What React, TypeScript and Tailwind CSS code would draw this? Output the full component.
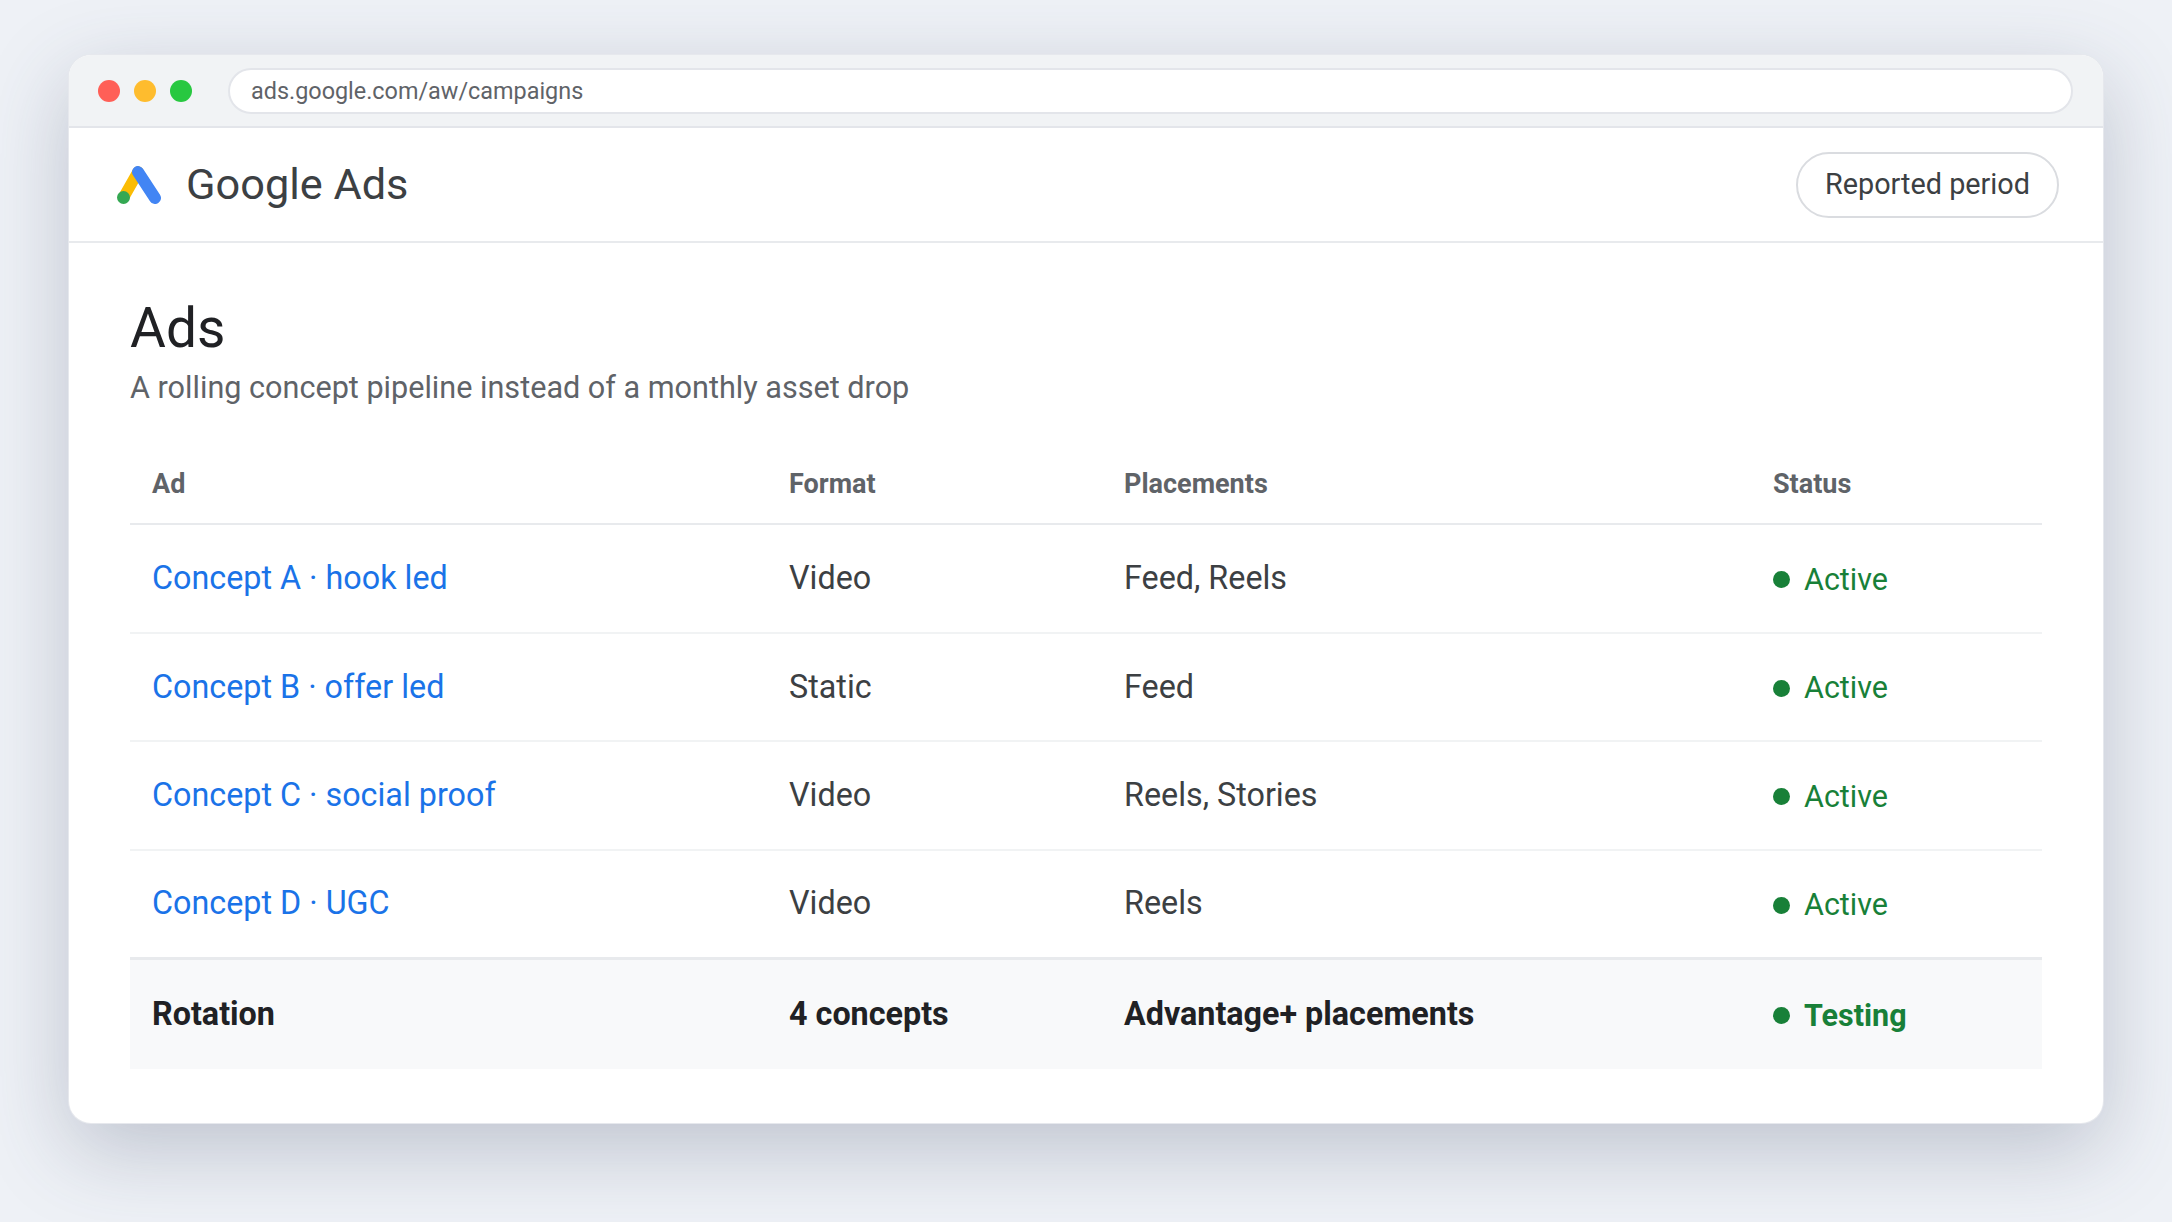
const ROWS = [
  { ad: 'Concept A · hook led', format: 'Video', placements: 'Feed, Reels' },
  { ad: 'Concept B · offer led', format: 'Static', placements: 'Feed' },
  { ad: 'Concept C · social proof', format: 'Video', placements: 'Reels, Stories' },
  { ad: 'Concept D · UGC', format: 'Video', placements: 'Reels' },
];

function GoogleAdsLogo() {
  return (
    <svg width="44" height="38" viewBox="0 0 44 38" fill="none">
      <path d="M6.5 31.5L21 6" stroke="#fbbc04" strokeWidth="11.5" strokeLinecap="round" />
      <path d="M21 6L38 32" stroke="#4285f4" strokeWidth="12" strokeLinecap="round" />
      <circle cx="6.5" cy="31.5" r="6.5" fill="#34a853" />
    </svg>
  );
}

function Status({ label, bold }: { label: string; bold?: boolean }) {
  return (
    <span className={`flex items-center gap-[14px] pt-[3px] text-[30.5px] text-[#188038] ${bold ? 'font-bold' : ''}`}>
      <span className="h-[17px] w-[17px] rounded-full bg-[#188038]" />
      {label}
    </span>
  );
}

export default function App() {
  return (
    <div className="h-[1222px] w-[2172px] overflow-hidden bg-[#eef1f6] px-[69px] pt-[55px] font-['Roboto',sans-serif]">
      <div className="h-[1068px] overflow-hidden rounded-[22px] bg-white shadow-[0_0_0_1px_#e6e8ed,0_26px_84px_rgba(60,70,100,0.27)]">
        <div className="flex h-[73px] items-center border-b-2 border-[#e3e5ea] bg-[#f1f3f5] pl-[29px] pr-[30px]">
          <div className="flex gap-[14px]">
            <span className="h-[22px] w-[22px] rounded-full bg-[#ff5f57]" />
            <span className="h-[22px] w-[22px] rounded-full bg-[#febc2e]" />
            <span className="h-[22px] w-[22px] rounded-full bg-[#28c840]" />
          </div>
          <div className="ml-[36px] flex h-[46px] flex-1 items-center rounded-full border-2 border-[#e3e5ea] bg-white pl-[21px] pt-[2px] text-[23.4px] text-[#5f6368]">
            ads.google.com/aw/campaigns
          </div>
        </div>

        <div className="flex h-[115px] items-center justify-between border-b-2 border-[#e8eaed] pl-[48px] pr-[44px]">
          <div className="flex items-center gap-[25px]">
            <GoogleAdsLogo />
            <span className="pt-[2px] text-[43.3px] text-[#3c4043]">Google Ads</span>
          </div>
          <button className="h-[66px] rounded-full border-2 border-[#dadce0] px-[27px] text-[28.8px] text-[#3c4043]">
            Reported period
          </button>
        </div>

        <div className="px-[61px] pt-[52px]">
          <h1 className="text-[55px] leading-[66px] text-[#202124]">Ads</h1>
          <p className="mt-[6px] text-[30.6px] leading-[42px] text-[#5f6368]">
            A rolling concept pipeline instead of a monthly asset drop
          </p>

          <table className="mt-[36px] w-full table-fixed border-collapse text-[32.3px] text-[#3c4043]">
            <colgroup>
              <col className="w-[637px]" />
              <col className="w-[335px]" />
              <col className="w-[649px]" />
              <col />
            </colgroup>
            <thead>
              <tr className="h-[79px] border-b-2 border-[#e8eaed] text-left text-[27px] text-[#5f6368]">
                <th className="px-[22px] font-bold">Ad</th>
                <th className="px-[22px] font-bold">Format</th>
                <th className="px-[22px] font-bold">Placements</th>
                <th className="px-[22px] font-bold">Status</th>
              </tr>
            </thead>
            <tbody>
              {ROWS.map((row) => (
                <tr key={row.ad} className="h-[108.5px] border-b-2 border-[#f1f3f4] last:border-b-0">
                  <td className="px-[22px] text-[#1a73e8]">{row.ad}</td>
                  <td className="px-[22px]">{row.format}</td>
                  <td className="px-[22px]">{row.placements}</td>
                  <td className="px-[22px]">
                    <Status label="Active" />
                  </td>
                </tr>
              ))}
              <tr className="h-[111px] border-t-[3px] border-[#e8eaed] bg-[#f8f9fa] font-bold text-[#202124]">
                <td className="px-[22px]">Rotation</td>
                <td className="px-[22px]">4 concepts</td>
                <td className="px-[22px]">Advantage+ placements</td>
                <td className="px-[22px]">
                  <Status label="Testing" bold />
                </td>
              </tr>
            </tbody>
          </table>
        </div>
      </div>
    </div>
  );
}
